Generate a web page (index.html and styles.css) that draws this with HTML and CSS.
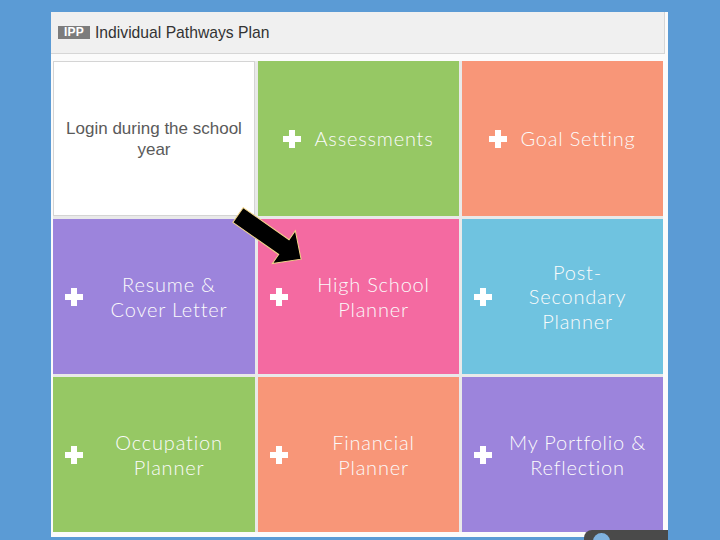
FILE: index.html
```html
<!DOCTYPE html>
<html>
<head>
<meta charset="utf-8">
<link rel="stylesheet" href="styles.css">
</head>
<body>
<div class="panel">
  <div class="header">
    <span class="badge">IPP</span>
    <span class="title">Individual Pathways Plan</span>
  </div>
  <div class="grid">
    <div class="tile login"><span>Login during the school<br>year</span></div>
    <div class="tile green inline"><span class="plus"></span><span class="label">Assessments</span></div>
    <div class="tile orange inline"><span class="plus"></span><span class="label">Goal Setting</span></div>

    <div class="tile purple"><span class="plus"></span><span class="label">Resume &amp;<br>Cover Letter</span></div>
    <div class="tile pink"><span class="plus"></span><span class="label">High School<br>Planner</span></div>
    <div class="tile cyan"><span class="plus"></span><span class="label">Post-<br>Secondary<br>Planner</span></div>

    <div class="tile green"><span class="plus"></span><span class="label">Occupation<br>Planner</span></div>
    <div class="tile orange"><span class="plus"></span><span class="label">Financial<br>Planner</span></div>
    <div class="tile purple"><span class="plus"></span><span class="label">My Portfolio &amp;<br>Reflection</span></div>
  </div>
</div>
<svg class="arrow" width="720" height="540" viewBox="0 0 720 540">
  <polygon transform="translate(238 215) rotate(35)" points="0,-9 56,-9 56,-20 77,0 56,20 56,9 0,9" fill="#000" stroke="#f2d58a" stroke-width="1"/>
</svg>
<div class="player"><span class="dot"></span></div>
</body>
</html>
```
FILE: styles.css
```css
html, body {
  margin: 0;
  padding: 0;
}
body {
  background: #5b9bd5;
  width: 720px;
  height: 540px;
  overflow: hidden;
  position: relative;
  font-family: "Liberation Sans", Arial, sans-serif;
}
.panel {
  margin: 12px 0 0 51px;
  width: 617px;
  height: 525px;
  background: #fbfbfb;
  display: flex;
  flex-direction: column;
}
.header {
  height: 41px;
  background: #f0f0f0;
  border: 1px solid #d6d6d6;
  border-top: none;
  border-left: none;
  margin-right: 3px;
  display: flex;
  align-items: center;
  padding-left: 7px;
  gap: 5px;
}
.badge {
  background: #7c7c7c;
  color: #fff;
  font-size: 12px;
  font-weight: bold;
  width: 32px;
  height: 13px;
  line-height: 13px;
  text-align: center;
  letter-spacing: 0.2px;
}
.title {
  font-size: 15.7px;
  color: #333;
}
.grid {
  margin: 7px 0 0 2px;
  display: grid;
  grid-template-columns: 202px 201px 201px;
  grid-template-rows: 155px 155px 155px;
  gap: 3px;
  background: #e9e9e9;
  width: 610px;
}
.tile {
  display: flex;
  align-items: center;
  color: #fbfbfb;
  font-family: Lato, "Open Sans", sans-serif;
  font-weight: 300;
  font-size: 20px;
  letter-spacing: 0.8px;
  line-height: 24.5px;
  padding-left: 12px;
}
.tile .label {
  flex: 1;
  text-align: center;
}
.tile.inline {
  justify-content: center;
  padding-left: 0;
  gap: 13px;
}
.tile.inline .label {
  flex: none;
}
.plus {
  width: 18px;
  height: 18px;
  flex: none;
  position: relative;
}
.plus::before, .plus::after {
  content: "";
  position: absolute;
  background: #fff;
}
.plus::before {
  left: 6px;
  top: 0;
  width: 6px;
  height: 18px;
}
.plus::after {
  left: 0;
  top: 6px;
  width: 18px;
  height: 6px;
}
.login {
  background: #fff;
  border: 1px solid #d4d4d4;
  color: #5a5a5a;
  font-family: "Liberation Sans", Arial, sans-serif;
  font-weight: normal;
  font-size: 17px;
  letter-spacing: 0;
  line-height: 21px;
  justify-content: center;
  text-align: center;
  padding: 0 0 0 0;
}
.green { background: #96c864; }
.orange { background: #f89678; }
.purple { background: #9c84dc; }
.pink { background: #f46aa1; }
.cyan { background: #6fc3e0; }
.arrow {
  position: absolute;
  left: 0;
  top: 0;
  pointer-events: none;
}
.player {
  position: absolute;
  left: 584px;
  top: 530px;
  width: 84px;
  height: 12px;
  background: #4a4a4a;
  border-radius: 8px 0 0 0;
  overflow: hidden;
}
.dot {
  position: absolute;
  left: 9px;
  top: 3px;
  width: 17px;
  height: 17px;
  border-radius: 50%;
  background: #7fb2e0;
}
```
